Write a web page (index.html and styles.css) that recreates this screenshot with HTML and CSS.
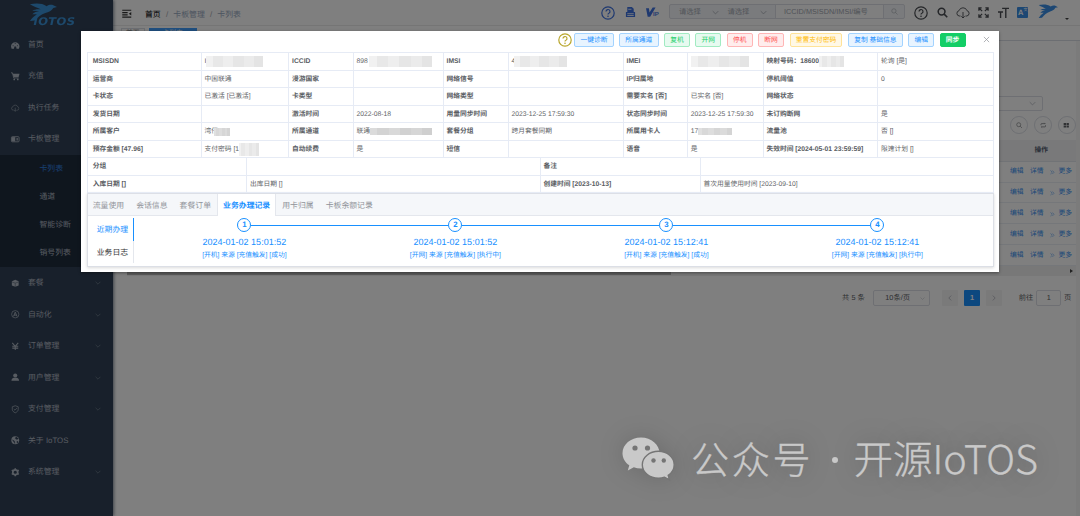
FILE: index.html
```
<!DOCTYPE html>
<html>
<head>
<meta charset="utf-8">
<title>IoTOS</title>
<link rel="stylesheet" href="styles.css">
</head>
<body>
<svg class="defs" width="0" height="0">
  <symbol id="chev" viewBox="0 0 10 10"><path d="M1 3l4 4 4-4" fill="none" stroke="currentColor" stroke-width="1.1"/></symbol>
  <symbol id="bird" viewBox="0 0 60 40" preserveAspectRatio="none"><path d="M2 3C14 0 28 0 38 7c4-3 10-4 14-2l8 4-8 2c-3 6-10 9-17 11-9 3-16 9-23 17l-10 1c4-6 9-11 15-15H7c4-4 10-6 15-7L7 17c5-3 12-4 18-3C17 10 10 8 2 3z" fill="currentColor"/></symbol>
  <symbol id="search" viewBox="0 0 12 12"><circle cx="5" cy="5" r="3.7" fill="none" stroke="currentColor" stroke-width="var(--sw,1)"/><path d="M7.8 7.8l3.4 3.4" stroke="currentColor" stroke-width="var(--sw,1)"/></symbol>
  <symbol id="cloud" viewBox="0 0 14 12"><path d="M4.5 9H3.2A2.7 2.7 0 0 1 3 3.700 4.200 4.200 0 0 1 11 3.700 2.700 2.700 0 0 1 10.800 9H9.500M7 5v6M5.300 9.300L7 11l1.700-1.700" fill="none" stroke="currentColor" stroke-width=".9"/></symbol>
  <symbol id="help" viewBox="0 0 14 14"><circle cx="7" cy="7" r="6.200" fill="none" stroke="currentColor" stroke-width="1.200"/><path d="M5 5.500a2 2 0 1 1 2.900 1.800c-.7.300-.9.600-.9 1.300" fill="none" stroke="currentColor" stroke-width="1.200"/><circle cx="7" cy="10.300" r=".8" fill="currentColor"/></symbol>
</svg>

<div class="app">
  <aside class="sidebar">
    <div class="logo">
      <svg class="logo-bird"><use href="#bird"/></svg>
      <span class="logo-name">IOTOS</span>
    </div>
    <div class="item"><svg class="ico" viewBox="0 0 10 10"><path d="M0 6.500a5 5 0 0 1 10 0L9.300 9H6.500L6 6.500H4L3.500 9H.7z" fill="currentColor"/><path d="M2 5.500h1M5 2.500v1M7 5.500h1" stroke="#304156"/></svg><span>首页</span></div>
    <div class="item"><svg class="ico" viewBox="0 0 10 10"><path d="M0 1h1.700l1.500 6H9" fill="none" stroke="currentColor"/><path d="M2 2h8L9 6H3z" fill="currentColor"/><circle cx="3.800" cy="8.700" r="1" fill="currentColor"/><circle cx="8" cy="8.700" r="1" fill="currentColor"/></svg><span>充值</span></div>
    <div class="item"><svg class="ico"><use href="#cloud"/></svg><span>执行任务</span></div>
    <div class="item"><svg class="ico" viewBox="0 0 10 10"><rect x=".5" y="2" width="9" height="6" rx="1" fill="none" stroke="currentColor"/><rect x="1" y="2.500" width="4" height="5" fill="currentColor"/><path d="M6.500 3.500h1.500v3H6.500z" fill="currentColor"/></svg><span>卡板管理</span></div>
    <div class="submenu">
      <div class="sub on">卡列表</div><div class="sub">通道</div><div class="sub">智能诊断</div><div class="sub">销号列表</div>
    </div>
    <div class="item"><svg class="ico" viewBox="0 0 10 10"><path d="M5 1l4 1.500v5L5 9.200 1 7.500v-5z" fill="currentColor"/><path d="M1 3.500l4 1.300 4-1.300M5 5v4" stroke="#304156" stroke-width=".5" fill="none"/></svg><span>套餐</span><svg class="arr"><use href="#chev"/></svg></div>
    <div class="item"><svg class="ico" viewBox="0 0 10 10"><circle cx="5" cy="5" r="4.300" fill="none" stroke="currentColor" stroke-width=".8"/><path d="M3 7.500L5 2.500l2 5M3.500 6h3" fill="none" stroke="currentColor"/></svg><span>自动化</span><svg class="arr"><use href="#chev"/></svg></div>
    <div class="item"><svg class="ico" viewBox="0 0 10 10"><path d="M1.500 1L5 5l3.500-4M5 5v4.500M1.500 5h7M1.500 7.200h7" fill="none" stroke="currentColor" stroke-width="1.200"/></svg><span>订单管理</span><svg class="arr"><use href="#chev"/></svg></div>
    <div class="item"><svg class="ico" viewBox="0 0 10 10"><circle cx="5" cy="3" r="2.400" fill="currentColor"/><path d="M.5 9.200c0-3 2-3.500 4.500-3.500s4.500.5 4.500 3.500z" fill="currentColor"/></svg><span>用户管理</span><svg class="arr"><use href="#chev"/></svg></div>
    <div class="item"><svg class="ico" viewBox="0 0 10 10"><path d="M5 .9l3.500 1.200v3C8.500 7 7 8.300 5 9.200 3 8.300 1.500 7 1.500 5.100v-3zM3.300 4.800l1.400 1.300 2.200-2.400" fill="none" stroke="currentColor" stroke-width=".8"/></svg><span>支付管理</span><svg class="arr"><use href="#chev"/></svg></div>
    <div class="item"><svg class="ico" viewBox="0 0 10 10"><circle cx="5" cy="5" r="4.600" fill="currentColor"/><path d="M6 .8L5 3l2 1 2-1M1.500 4.500L4 6l.5 3M7 6l1.500 1-1.300 1.400z" fill="#304156" stroke="#304156" stroke-width=".5"/></svg><span>关于 IoTOS</span></div>
    <div class="item"><svg class="ico" viewBox="0 0 10 10"><circle cx="5" cy="5" r="2.900" fill="none" stroke="currentColor" stroke-width="2"/><path d="M5 .2v2M5 7.800v2M.9 2.600l1.700 1M7.400 6.400l1.700 1M.9 7.400l1.700-1M7.400 3.600l1.700-1" stroke="currentColor" stroke-width="1.800"/></svg><span>系统管理</span><svg class="arr"><use href="#chev"/></svg></div>
  </aside>

  <main class="main">
    <header class="navbar">
      <svg class="burger" viewBox="0 0 10 10"><path d="M0 1.300h10M0 4h6M0 6.500h6M0 9h10" stroke="currentColor" stroke-width="1.200"/><path d="M10 3.200v4L7.300 5.200z" fill="currentColor"/></svg>
      <div class="crumbs"><b>首页</b><i>/</i><span>卡板管理</span><i>/</i><span>卡列表</span></div>
      <div class="tools">
        <svg class="t blue t14 first"><use href="#help"/></svg>
        <svg class="t blue t11" viewBox="0 0 11 12"><path d="M2 0h5l2 2v4H2zM.5 5.500h10V11h-10z" fill="currentColor"/><path d="M3 2.500h3.500M2 7.300h7M2 9.300h7" stroke="#fff" stroke-width=".9"/></svg>
        <span class="vip"><svg viewBox="0 0 12 12"><path d="M0 1h3.500l.7 5L8 0h3.500L5 11H2z" fill="currentColor"/></svg><em>IP</em></span>
        <div class="group">
          <span class="sel">请选择<svg><use href="#chev"/></svg></span>
          <span class="sel">请选择<svg><use href="#chev"/></svg></span>
          <span class="inp">ICCID/MSISDN/IMSI/编号</span>
          <span class="btn"><svg><use href="#search"/></svg></span>
        </div>
        <svg class="t t14"><use href="#help"/></svg>
        <svg class="t t11 bold"><use href="#search"/></svg>
        <svg class="t t14 thin"><use href="#cloud"/></svg>
        <svg class="t t11 tight" viewBox="0 0 12 12"><path d="M1 4V1h3M8 1h3v3M11 8v3H8M4 11H1V8M1 1l3.500 3.500M11 1L7.500 4.500M1 11l3.500-3.500M11 11L7.500 7.500" fill="none" stroke="currentColor" stroke-width="1.400"/></svg>
        <svg class="t t11 tight" viewBox="0 0 12 12"><path d="M4.500 1.500H12M8.500 1.500V12M0 5.500h5.500M2.800 5.500V12" fill="none" stroke="currentColor" stroke-width="1.500"/></svg>
        <span class="lang">A<small>文</small></span>
        <svg class="avatar"><use href="#bird"/></svg>
        <span class="caret"></span>
      </div>
    </header>
    <div class="tags"><span class="tag">首页</span><span class="tag active">卡列表</span></div>
    <section class="content">
      <div class="filter"><svg><use href="#chev"/></svg></div>
      <div class="rounds">
        <span><svg><use href="#search"/></svg></span>
        <span><svg viewBox="0 0 10 10"><path d="M1.500 5V3.500a1 1 0 0 1 1-1H8L6.800 1.300M8.500 5v1.500a1 1 0 0 1-1 1H2l1.200 1.200" fill="none" stroke="currentColor"/></svg></span>
        <span><svg viewBox="0 0 10 10"><path d="M1 1.500h3.600v3H1zM5.400 1.500H9v3H5.400zM1 5.500h3.600v3H1zM5.400 5.500H9v3H5.400z" fill="currentColor"/></svg></span>
      </div>
      <div class="thead">操作</div>
      <div class="trow"><a>编辑</a><a>详情</a><a class="more"><svg viewBox="0 0 10 10"><path d="M1 1l4 4-4 4M5 1l4 4-4 4" fill="none" stroke="currentColor"/></svg>更多</a></div>
      <div class="trow"><a>编辑</a><a>详情</a><a class="more"><svg viewBox="0 0 10 10"><path d="M1 1l4 4-4 4M5 1l4 4-4 4" fill="none" stroke="currentColor"/></svg>更多</a></div>
      <div class="trow"><a>编辑</a><a>详情</a><a class="more"><svg viewBox="0 0 10 10"><path d="M1 1l4 4-4 4M5 1l4 4-4 4" fill="none" stroke="currentColor"/></svg>更多</a></div>
      <div class="trow"><a>编辑</a><a>详情</a><a class="more"><svg viewBox="0 0 10 10"><path d="M1 1l4 4-4 4M5 1l4 4-4 4" fill="none" stroke="currentColor"/></svg>更多</a></div>
      <div class="trow"><a>编辑</a><a>详情</a><a class="more"><svg viewBox="0 0 10 10"><path d="M1 1l4 4-4 4M5 1l4 4-4 4" fill="none" stroke="currentColor"/></svg>更多</a></div>
      <div class="hscroll"><span class="thumb"></span><span class="harrow"></span></div>
      <div class="pager">
        <span class="total">共 5 条</span>
        <span class="size">10条/页<svg><use href="#chev"/></svg></span>
        <span class="pg prev"><svg class="left"><use href="#chev"/></svg></span>
        <span class="pg cur">1</span>
        <span class="pg next"><svg class="right"><use href="#chev"/></svg></span>
        <span class="go">前往</span><span class="goin">1</span><span>页</span>
      </div>
    </section>
  </main>
</div>
<div class="mask"></div>

<div class="dialog">
  <div class="bar">
    <svg class="q"><use href="#help"/></svg>
    <span class="b p">一键诊断</span><span class="b p">所属通道</span><span class="b s">复机</span><span class="b s">开网</span><span class="b d">停机</span><span class="b d">断网</span><span class="b w">重置支付密码</span><span class="b p">复制 基础信息</span><span class="b p">编辑</span><span class="b solid">同步</span>
    <svg class="close" viewBox="0 0 8 8"><path d="M1 1l6 6M7 1L1 7" stroke="currentColor" stroke-width=".8"/></svg>
  </div>
  <div class="grid g10">
    <b>MSISDN</b><span>I<i class="mz m1"></i></span><b>ICCID</b><span>898<i class="mz m2"></i></span><b>IMSI</b><span>4<i class="mz m3"></i></span><b>IMEI</b><span><i class="mz m4"></i></span><b>映射号码：18600<i class="mz m5"></i></b><span>轮询 [是]</span>
    <b>运营商</b><span>中国联通</span><b>漫游国家</b><span></span><b>网络信号</b><span></span><b>IP归属地</b><span></span><b>停机阈值</b><span>0</span>
    <b>卡状态</b><span>已激活 [已激活]</span><b>卡类型</b><span></span><b>网络类型</b><span></span><b>需要实名 [否]</b><span>已实名 [否]</span><b>网络状态</b><span></span>
    <b>发货日期</b><span></span><b>激活时间</b><span>2022-08-18</span><b>用量同步时间</b><span>2023-12-25 17:59:30</span><b>状态同步时间</b><span>2023-12-25 17:59:30</span><b>未订购断网</b><span>是</span>
    <b>所属客户</b><span>湾仔<i class="mz m6"></i></span><b>所属通道</b><span>联通<i class="mz m7"></i></span><b>套餐分组</b><span>跨月套餐同期</span><b>所属用卡人</b><span>17<i class="mz m8"></i></span><b>流量池</b><span>否 []</span>
    <b>预存金额 [47.96]</b><span>支付密码 [1<i class="mz m9"></i></span><b>自动续费</b><span>是</span><b>短信</b><span></span><b>语音</b><span>是</span><b>失效时间 [2024-05-01 23:59:59]</b><span>限速计划 []</span>
  </div>
  <div class="grid g4">
    <b>分组</b><span></span><b>备注</b><span></span>
    <b>入库日期 []</b><span>出库日期 []</span><b>创建时间 [2023-10-13]</b><span>首次用量使用时间 [2023-09-10]</span>
  </div>
  <div class="card">
    <div class="tabs"><span>流量使用</span><span>会话信息</span><span>套餐订单</span><span class="on">业务办理记录</span><span>用卡归属</span><span>卡板余额记录</span></div>
    <div class="pane">
      <div class="side"><span class="on">近期办理</span><span>业务日志</span></div>
      <div class="steps">
        <div class="step"><div class="dot">1</div><h4>2024-01-02 15:01:52</h4><p>[开机] 来源 [充值触发] [成功]</p></div>
        <div class="step"><div class="dot">2</div><h4>2024-01-02 15:01:52</h4><p>[开网] 来源 [充值触发] [执行中]</p></div>
        <div class="step"><div class="dot">3</div><h4>2024-01-02 15:12:41</h4><p>[开机] 来源 [充值触发] [成功]</p></div>
        <div class="step"><div class="dot">4</div><h4>2024-01-02 15:12:41</h4><p>[开网] 来源 [充值触发] [执行中]</p></div>
      </div>
    </div>
  </div>
</div>

<div class="mark">
  <svg viewBox="0 0 52 43"><path d="M19 .5C8.700.500.500 7.500.500 16.200c0 5 2.600 9.200 6.800 12.100L5.800 33.500l6-3.200c2.300.8 4.700 1.200 7.200 1.200C29.300 31.500 37.500 24.700 37.500 16.200S29.300.500 19 .500z" fill="currentColor"/><path d="M36.500 14.300c-9 0-16.200 6-16.200 13.400s7.200 13.400 16.200 13.400c2.100 0 4.100-.3 6-.9l5 2.700-1.300-4.500c3.700-2.500 6-6.300 6-10.700 0-7.400-7-13.400-15.700-13.400z" fill="currentColor" stroke="#757575" stroke-width="1.400"/><g fill="#757575"><circle cx="13" cy="11" r="2.600"/><circle cx="25.500" cy="11" r="2.600"/><circle cx="31.500" cy="23.500" r="2.200"/><circle cx="41.800" cy="23.500" r="2.200"/></g></svg>
  <span class="m-a">公众号</span><span class="m-dot"></span><span class="m-b">开源IoTOS</span>
</div>
</body>
</html>
```
FILE: styles.css
```
* { box-sizing: border-box; }
body {
  margin: 0; width: 1080px; height: 516px; overflow: hidden; position: relative;
  font: 6.75px/1 "Liberation Sans", "Noto Sans CJK SC", sans-serif;
  color: #606266; background: #fff; text-rendering: geometricPrecision; white-space: nowrap;
}
svg { display: block; flex: none; overflow: visible; }
.defs { position: absolute; }
i, em { font-style: normal; }
.app { display: flex; width: 1080px; height: 516px; }

.sidebar { width: 112.500px; background: #304156; color: #b0b8c4; font-size: 7.870px; box-shadow: 1px 0 3px rgba(0,21,41,.5); z-index: 1; }
.logo { height: 28.500px; padding: 3px 0 0 29px; color: #3a92d8; }
.logo-bird { width: 28px; height: 18px; }
.logo-name { display: block; margin: -4.500px 0 0 4.500px; font: italic bold 11.500px/9px "DejaVu Sans", sans-serif; letter-spacing: .4px; transform: scaleY(.92); }
.item { display: flex; align-items: center; height: 31.500px; padding: 1px 0 0 11px; }
.ico { width: 8.500px; height: 8.500px; margin-right: 8.500px; }
.arr { width: 6px; height: 6px; margin: 0 12px 0 auto; opacity: .55; }
.submenu { background: #1f2d3d; padding-left: 39.500px; }
.sub { height: 28.100px; line-height: 28.600px; }
.sub.on { color: #2f80e0; }

.main { flex: 1; min-width: 0; }
.navbar { height: 26px; display: flex; align-items: center; padding-left: 9.500px; border-bottom: 1px solid #eaeaea; }
.burger { width: 9.500px; height: 9px; color: #333; margin-right: 13.500px; margin-top: 2px; }
.crumbs { display: flex; font-size: 7.870px; color: #97a8be; margin-top: 4px; }
.crumbs b { font-weight: 500; color: #303133; }
.crumbs i { margin: 0 5.200px; color: #a0a4ac; }
.tools { margin-left: auto; display: flex; align-items: center; padding-right: 11.500px; color: #4a4d52; }
.t { margin-right: 9px; }
.t14 { width: 14px; height: 14px; }
.first { margin-right: 10px; }
.t11 { width: 11px; height: 11px; margin-right: 10px; }
.bold { --sw: 1.700; margin-right: 8px; }
.tight { margin-right: 8.500px; }
.thin { --sw: .8; margin-right: 8px; }
.blue { color: #3f73e0; }
.vip { display: flex; align-items: flex-end; color: #3f73e0; margin-right: 9px; width: 14px; }
.vip svg { width: 10px; height: 11px; }
.vip em { font-weight: bold; font-size: 6px; margin-left: -3px; }
.group { display: flex; height: 15.500px; width: 236px; margin: -2px 9px 0 0; border: 1px solid #dcdfe6; border-radius: 2px; background: #f5f7fa; color: #a3a8b2; font-size: 7.300px; }
.sel { display: flex; align-items: center; width: 56.500px; padding: 1px 0 0 9px; }
.sel:first-child { width: 48.500px; }
.sel svg { width: 7px; height: 7px; margin-left: 11px; }
.inp { width: 108px; background: #fff; line-height: 14.500px; padding-left: 8px; border-left: 1px solid #dcdfe6; overflow: hidden; }
.btn { flex: 1; display: flex; align-items: center; justify-content: center; border-left: 1px solid #dcdfe6; }
.btn svg { width: 7px; height: 7px; }
.lang { width: 10.500px; height: 10.500px; margin-right: 10px; background: #3a8ee6; color: #fff; border-radius: 1px; font: bold 7.500px/11px "Liberation Sans", sans-serif; padding-left: 1px; display: flex; }
.lang small { font: 4px/7px "Noto Sans CJK SC", sans-serif; }
.avatar { width: 20px; height: 14px; color: #3a8ee6; margin-top: -3px; }
.caret { width: 4px; border: 2px solid transparent; border-top-color: #444; margin: 14px 0 0 7px; }
.tags { display: flex; gap: 4px; height: 14.500px; padding: 1.500px 0 0 8.500px; border-bottom: 1px solid #d8dce5; }
.tag { width: 23.500px; height: 11px; border: 1px solid #d8dce5; line-height: 10px; text-align: center; }
.tag.active { width: 48.500px; background: #409eff; border-color: #409eff; color: #fff; }

.content { display: flex; flex-direction: column; padding: 55px 0 0 14px; border-right: 4.500px solid #f6f6f6; height: 475.500px; }
.filter { align-self: flex-end; margin-right: 33.500px; width: 120px; height: 15px; border: 1px solid #dcdfe6; border-radius: 2px; color: #b0b4bc; }
.filter svg { width: 7px; height: 7px; margin: 3px 5.500px 0 auto; }
.rounds { display: flex; justify-content: flex-end; gap: 6px; margin: 5.500px .500px 0 0; }
.rounds span { width: 17.800px; height: 17.800px; border: 1px solid #dcdfe6; border-radius: 50%; display: grid; place-items: center; color: #606266; }
.rounds svg { width: 6.500px; height: 6.500px; }
.thead { height: 21.500px; margin-top: 6.500px; background: #f2f2f5; border-bottom: 1px solid #e3e6ec; font-weight: bold; line-height: 22.500px; color: #515a6e; text-align: right; padding-right: 28px; }
.trow { display: flex; justify-content: flex-end; align-items: center; gap: 6.500px; height: 20.850px; padding: 2px 4px 0 0; border-bottom: 1px solid #ebeef5; color: #2f8bf0; }
.more { display: flex; align-items: center; gap: 4px; }
.more svg { width: 4.500px; height: 4.500px; margin-top: -1px; }
.hscroll { display: flex; align-items: center; justify-content: space-between; height: 9.500px; background: #f1f1f1; padding-right: 3px; }
.thumb { width: 544px; height: 8px; background: #b8b8b8; }
.harrow { border: 2px solid transparent; border-left: 3px solid #444; border-right: 0; }
.pager { display: flex; align-items: center; height: 16px; margin-top: 14.500px; justify-content: flex-end; font-size: 7.300px; padding-right: 4.800px; }
.size { display: flex; align-items: center; justify-content: space-between; width: 56.500px; height: 16px; border: 1px solid #dcdfe6; border-radius: 2px; margin: 0 12px 0 8.500px; padding: 0 4px 0 11px; }
.size svg { width: 5px; height: 5px; color: #c0c4cc; }
.pg { width: 16.500px; height: 16px; background: #f4f4f5; display: grid; place-items: center; margin-right: 5.500px; border-radius: 1px; }
.pg svg { width: 6px; height: 6px; color: #a0a4ac; }
.left { transform: rotate(90deg); }
.right { transform: rotate(-90deg); }
.cur { background: #1890ff; color: #fff; font-weight: bold; }
.go { margin: 0 2.500px 0 11px; }
.goin { width: 25.500px; height: 16px; line-height: 14px; border: 1px solid #dcdfe6; border-radius: 2px; text-align: center; margin-right: 2.500px; }

.mask { position: absolute; inset: 0; background: rgba(0,0,0,.5); z-index: 2; }

.dialog { position: absolute; z-index: 3; left: 81px; top: 31px; width: 918px; height: 241px; background: #fff; padding: 1.500px 5.500px 0 5.700px; box-shadow: 0 1px 3px rgba(0,0,0,.4); }
.bar { display: flex; height: 19.500px; padding: 0 4px 5px 0; align-items: center; justify-content: flex-end; }
.q { width: 14px; height: 14px; color: #b8a62c; margin-right: 2.500px; }
.b { height: 14.500px; line-height: 14px; padding: 0 5.200px; margin-right: 5.500px; border: 1px solid; border-radius: 2px; }
.p { color: #1890ff; background: #e8f4ff; border-color: #a3d3ff; }
.s { color: #13ce66; background: #e7faf0; border-color: #a1ebc2; }
.d { color: #ff4949; background: #ffeded; border-color: #ffb6b6; }
.w { color: #ffba00; background: #fff8e6; border-color: #ffe399; }
.solid { color: #fff; background: #13ce66; border-color: #13ce66; font-weight: bold; }
.close { width: 7px; height: 7px; color: #909399; margin-left: 11.500px; }
.grid { display: grid; grid-auto-rows: 17.500px; border-left: 1px solid #e6ebf5; }
.g10 { border-top: 1px solid #e6ebf5; grid-template-columns: 114.200px 87.500px 64.500px 90px 65px 115px 64.200px 75.700px 114.600px 1fr; }
.g4 { grid-template-columns: 159.500px 293.600px 160px 1fr; }
.grid > * { position: relative; line-height: 18px; padding-left: 2.700px; border-right: 1px solid #e6ebf5; border-bottom: 1px solid #e6ebf5; min-width: 0; }
.grid > b { color: #5a5d63; }
.grid > b:first-child, .g10 > b:nth-child(10n+1), .g4 > b:nth-child(4n+1) { padding-left: 5px; }
.mz { position: absolute; top: 3px; height: 11px; background: linear-gradient(90deg, #f1f1f1 0 12%, #e8e8e8 12% 30%, #eeeeee 30% 48%, #e6e6e6 48% 66%, #ebebeb 66% 84%, #e4e4e4 84%); }
.m1 { left: 4.500px; width: 57px; }
.m2 { left: 15.500px; width: 63px; }
.m3 { left: 5.500px; width: 53px; }
.m4 { left: 3px; width: 58px; }
.m5 { left: 55px; width: 25px; }
.m6 { left: 12px; width: 16px; height: 8px; top: 5px; filter: brightness(.93); }
.m7 { left: 16px; width: 62px; height: 7px; top: 5px; filter: brightness(.91); }
.m8 { left: 10px; width: 34px; height: 7px; top: 5px; filter: brightness(.93); }
.m9 { left: 37px; width: 20px; top: 2px; height: 13px; }

.card { height: 74px; border: 1px solid #dcdfe6; box-shadow: 0 1px 3px rgba(0,0,0,.15); }
.tabs { display: flex; height: 21.500px; background: #f5f7fa; border-bottom: 1px solid #e4e7ed; font-size: 7.870px; color: #909399; }
.tabs span { padding: 0 6px; line-height: 23px; }
.tabs span:first-child { padding-left: 5px; }
.tabs .on { background: #fff; color: #1890ff; font-weight: bold; padding: 0 5px; height: 22px; border-left: 1px solid #e4e7ed; border-right: 1px solid #e4e7ed; }
.pane { display: flex; padding-top: 2.500px; }
.side { width: 46.500px; height: 45px; font-size: 7.870px; color: #303133; border-right: 1px solid #e4e7ed; }
.side span { display: block; height: 22.500px; line-height: 24px; padding-left: 9px; }
.side .on { color: #1890ff; border-right: 1.500px solid #1890ff; margin-right: -1px; }
.steps { flex: 1; display: flex; padding-left: 4.700px; color: #1890ff; }
.step { width: 211px; text-align: center; position: relative; }
.step h4 { margin: 5px 0 0; font: 9px/10px "Liberation Sans", sans-serif; }
.step p { margin: 4.700px 0 0; line-height: 8px; }
.dot { width: 14px; height: 14px; margin: 0 auto; border: 1.500px solid #1890ff; border-radius: 50%; background: #fff; font: bold 7.870px/12px "Liberation Sans", sans-serif; }
.step:not(:last-child)::after { content: ""; position: absolute; left: 112.500px; right: -98.500px; top: 6.500px; height: 1px; background: #1890ff; }

.mark { position: absolute; z-index: 4; left: 622px; top: 435px; display: flex; align-items: center; height: 46px; color: #c9c9c9; font: 300 38px/46px "Noto Sans CJK SC", sans-serif; text-shadow: 0 0 26px rgba(0,0,0,.35); -webkit-text-stroke: .4px #c9c9c9; }
.mark svg { width: 52px; height: 43px; filter: drop-shadow(0 0 12px rgba(0,0,0,.15)); }
.m-a { margin-left: 17px; letter-spacing: 2.800px; }
.m-dot { width: 6px; height: 6px; border-radius: 50%; background: #c9c9c9; margin: 4px 15px 0 19px; }
.m-b { font-size: 39.500px; }
```
